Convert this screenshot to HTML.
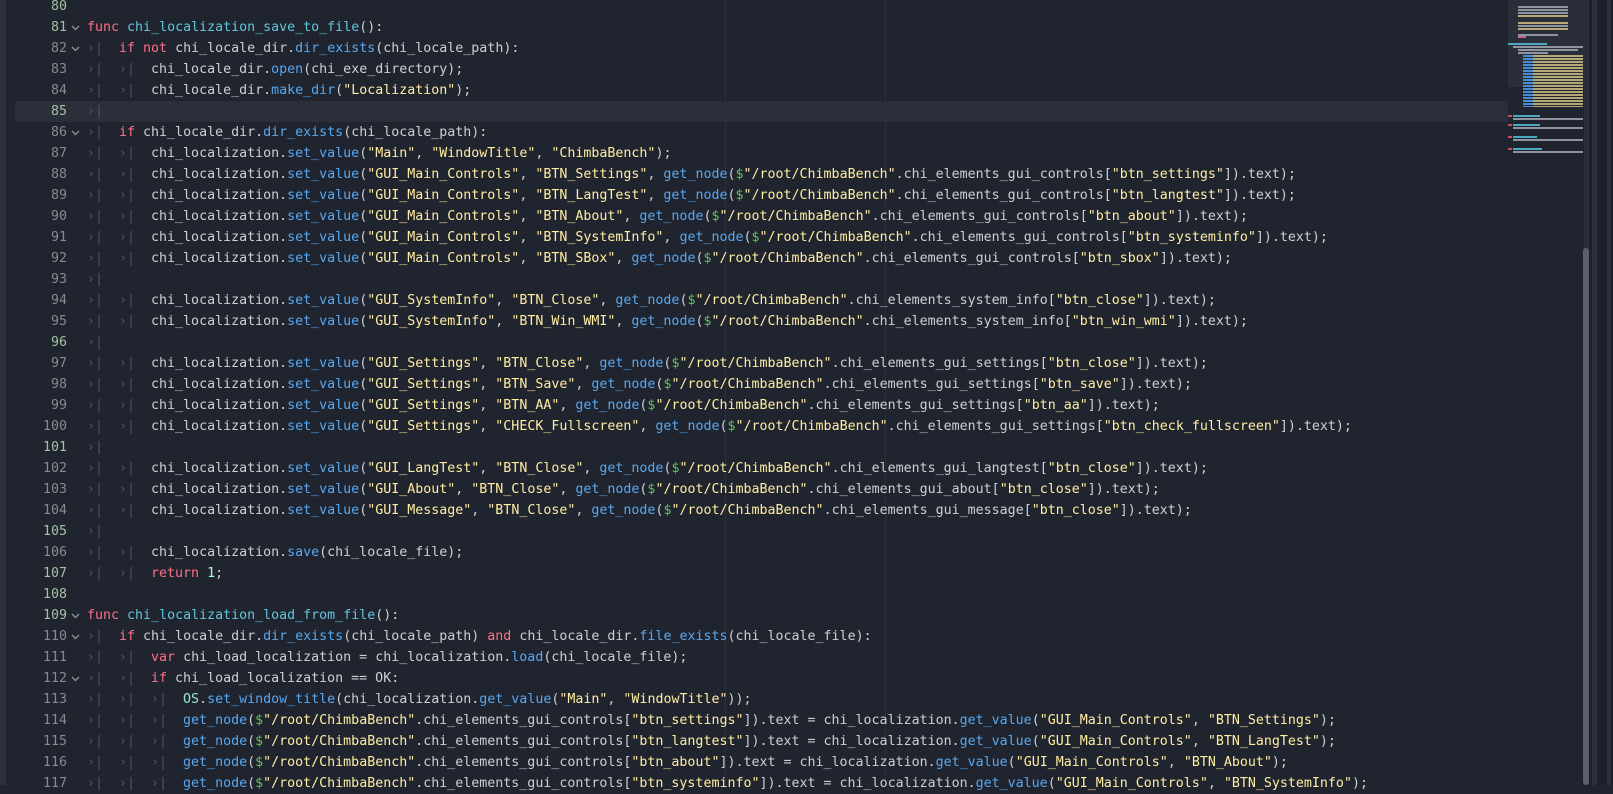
<!DOCTYPE html>
<html><head><meta charset="utf-8"><style>
html,body{margin:0;padding:0;}
body{width:1613px;height:785px;overflow:hidden;background:#20242f;position:relative;font-family:"DejaVu Sans Mono","Liberation Mono",monospace;font-size:13.3px;color:#cdcfd2;}
.lb{position:absolute;left:0;top:0;width:6px;height:785px;background:#2c313d;}
.hl{position:absolute;left:15px;top:100.5px;width:1491px;height:21px;background:#2b2f3a;}
.vg{position:absolute;top:0;width:1px;height:785px;background:#2a2f3c;}
.r{position:absolute;left:0;height:21px;line-height:21px;white-space:pre;width:1506px;}
.ln{position:absolute;left:27px;width:40px;text-align:right;color:#868a93;}
.ln.m{color:#a3c2a2;}
.fd{position:absolute;left:71px;top:8px;width:9px;height:6px;}
.c{position:absolute;left:87px;}
.t{display:inline-block;width:4ch;color:#4c5366;}
.k{color:#ff7085}.f{color:#57a8f0}.d{color:#5fc6dc}.s{color:#ffeda1}.g{color:#63c259}.n{color:#a1ffe0}.o{color:#8fe8d0}
.mm{position:absolute;left:1508px;top:0;width:80px;height:87px;background:#2a2e39;}
.bar{position:absolute;height:2px;}
</style></head><body>
<svg width="0" height="0" style="position:absolute"><defs><symbol id="ch" viewBox="0 0 9 6"><path d="M1 1 L4.5 4.5 L8 1" fill="none" stroke="#8a8e97" stroke-width="1.4"/></symbol></defs></svg>
<div class="lb"></div>
<div class="hl"></div>
<div class="vg" style="left:725px"></div>
<div class="vg" style="left:885px"></div>

<div class="r" style="top:-4.5px"><span class="ln m">80</span></div>
<div class="r" style="top:16.5px"><span class="ln m">81</span><svg class="fd"><use href="#ch"/></svg><span class="c"><span class="k">func</span> <span class="d">chi_localization_save_to_file</span>():</span></div>
<div class="r" style="top:37.5px"><span class="ln">82</span><svg class="fd"><use href="#ch"/></svg><span class="c"><span class="t">›|</span><span class="k">if</span> <span class="k">not</span> chi_locale_dir.<span class="f">dir_exists</span>(chi_locale_path):</span></div>
<div class="r" style="top:58.5px"><span class="ln">83</span><span class="c"><span class="t">›|</span><span class="t">›|</span>chi_locale_dir.<span class="f">open</span>(chi_exe_directory);</span></div>
<div class="r" style="top:79.5px"><span class="ln">84</span><span class="c"><span class="t">›|</span><span class="t">›|</span>chi_locale_dir.<span class="f">make_dir</span>(<span class="s">"Localization"</span>);</span></div>
<div class="r" style="top:100.5px"><span class="ln m">85</span><span class="c"><span class="t">›|</span></span></div>
<div class="r" style="top:121.5px"><span class="ln">86</span><svg class="fd"><use href="#ch"/></svg><span class="c"><span class="t">›|</span><span class="k">if</span> chi_locale_dir.<span class="f">dir_exists</span>(chi_locale_path):</span></div>
<div class="r" style="top:142.5px"><span class="ln">87</span><span class="c"><span class="t">›|</span><span class="t">›|</span>chi_localization.<span class="f">set_value</span>(<span class="s">"Main"</span>, <span class="s">"WindowTitle"</span>, <span class="s">"ChimbaBench"</span>);</span></div>
<div class="r" style="top:163.5px"><span class="ln">88</span><span class="c"><span class="t">›|</span><span class="t">›|</span>chi_localization.<span class="f">set_value</span>(<span class="s">"GUI_Main_Controls"</span>, <span class="s">"BTN_Settings"</span>, <span class="f">get_node</span>(<span class="g">$</span><span class="s">"/root/ChimbaBench"</span>.chi_elements_gui_controls[<span class="s">"btn_settings"</span>]).text);</span></div>
<div class="r" style="top:184.5px"><span class="ln">89</span><span class="c"><span class="t">›|</span><span class="t">›|</span>chi_localization.<span class="f">set_value</span>(<span class="s">"GUI_Main_Controls"</span>, <span class="s">"BTN_LangTest"</span>, <span class="f">get_node</span>(<span class="g">$</span><span class="s">"/root/ChimbaBench"</span>.chi_elements_gui_controls[<span class="s">"btn_langtest"</span>]).text);</span></div>
<div class="r" style="top:205.5px"><span class="ln">90</span><span class="c"><span class="t">›|</span><span class="t">›|</span>chi_localization.<span class="f">set_value</span>(<span class="s">"GUI_Main_Controls"</span>, <span class="s">"BTN_About"</span>, <span class="f">get_node</span>(<span class="g">$</span><span class="s">"/root/ChimbaBench"</span>.chi_elements_gui_controls[<span class="s">"btn_about"</span>]).text);</span></div>
<div class="r" style="top:226.5px"><span class="ln">91</span><span class="c"><span class="t">›|</span><span class="t">›|</span>chi_localization.<span class="f">set_value</span>(<span class="s">"GUI_Main_Controls"</span>, <span class="s">"BTN_SystemInfo"</span>, <span class="f">get_node</span>(<span class="g">$</span><span class="s">"/root/ChimbaBench"</span>.chi_elements_gui_controls[<span class="s">"btn_systeminfo"</span>]).text);</span></div>
<div class="r" style="top:247.5px"><span class="ln">92</span><span class="c"><span class="t">›|</span><span class="t">›|</span>chi_localization.<span class="f">set_value</span>(<span class="s">"GUI_Main_Controls"</span>, <span class="s">"BTN_SBox"</span>, <span class="f">get_node</span>(<span class="g">$</span><span class="s">"/root/ChimbaBench"</span>.chi_elements_gui_controls[<span class="s">"btn_sbox"</span>]).text);</span></div>
<div class="r" style="top:268.5px"><span class="ln">93</span><span class="c"><span class="t">›|</span></span></div>
<div class="r" style="top:289.5px"><span class="ln">94</span><span class="c"><span class="t">›|</span><span class="t">›|</span>chi_localization.<span class="f">set_value</span>(<span class="s">"GUI_SystemInfo"</span>, <span class="s">"BTN_Close"</span>, <span class="f">get_node</span>(<span class="g">$</span><span class="s">"/root/ChimbaBench"</span>.chi_elements_system_info[<span class="s">"btn_close"</span>]).text);</span></div>
<div class="r" style="top:310.5px"><span class="ln">95</span><span class="c"><span class="t">›|</span><span class="t">›|</span>chi_localization.<span class="f">set_value</span>(<span class="s">"GUI_SystemInfo"</span>, <span class="s">"BTN_Win_WMI"</span>, <span class="f">get_node</span>(<span class="g">$</span><span class="s">"/root/ChimbaBench"</span>.chi_elements_system_info[<span class="s">"btn_win_wmi"</span>]).text);</span></div>
<div class="r" style="top:331.5px"><span class="ln m">96</span><span class="c"><span class="t">›|</span></span></div>
<div class="r" style="top:352.5px"><span class="ln">97</span><span class="c"><span class="t">›|</span><span class="t">›|</span>chi_localization.<span class="f">set_value</span>(<span class="s">"GUI_Settings"</span>, <span class="s">"BTN_Close"</span>, <span class="f">get_node</span>(<span class="g">$</span><span class="s">"/root/ChimbaBench"</span>.chi_elements_gui_settings[<span class="s">"btn_close"</span>]).text);</span></div>
<div class="r" style="top:373.5px"><span class="ln">98</span><span class="c"><span class="t">›|</span><span class="t">›|</span>chi_localization.<span class="f">set_value</span>(<span class="s">"GUI_Settings"</span>, <span class="s">"BTN_Save"</span>, <span class="f">get_node</span>(<span class="g">$</span><span class="s">"/root/ChimbaBench"</span>.chi_elements_gui_settings[<span class="s">"btn_save"</span>]).text);</span></div>
<div class="r" style="top:394.5px"><span class="ln">99</span><span class="c"><span class="t">›|</span><span class="t">›|</span>chi_localization.<span class="f">set_value</span>(<span class="s">"GUI_Settings"</span>, <span class="s">"BTN_AA"</span>, <span class="f">get_node</span>(<span class="g">$</span><span class="s">"/root/ChimbaBench"</span>.chi_elements_gui_settings[<span class="s">"btn_aa"</span>]).text);</span></div>
<div class="r" style="top:415.5px"><span class="ln">100</span><span class="c"><span class="t">›|</span><span class="t">›|</span>chi_localization.<span class="f">set_value</span>(<span class="s">"GUI_Settings"</span>, <span class="s">"CHECK_Fullscreen"</span>, <span class="f">get_node</span>(<span class="g">$</span><span class="s">"/root/ChimbaBench"</span>.chi_elements_gui_settings[<span class="s">"btn_check_fullscreen"</span>]).text);</span></div>
<div class="r" style="top:436.5px"><span class="ln m">101</span><span class="c"><span class="t">›|</span></span></div>
<div class="r" style="top:457.5px"><span class="ln">102</span><span class="c"><span class="t">›|</span><span class="t">›|</span>chi_localization.<span class="f">set_value</span>(<span class="s">"GUI_LangTest"</span>, <span class="s">"BTN_Close"</span>, <span class="f">get_node</span>(<span class="g">$</span><span class="s">"/root/ChimbaBench"</span>.chi_elements_gui_langtest[<span class="s">"btn_close"</span>]).text);</span></div>
<div class="r" style="top:478.5px"><span class="ln">103</span><span class="c"><span class="t">›|</span><span class="t">›|</span>chi_localization.<span class="f">set_value</span>(<span class="s">"GUI_About"</span>, <span class="s">"BTN_Close"</span>, <span class="f">get_node</span>(<span class="g">$</span><span class="s">"/root/ChimbaBench"</span>.chi_elements_gui_about[<span class="s">"btn_close"</span>]).text);</span></div>
<div class="r" style="top:499.5px"><span class="ln">104</span><span class="c"><span class="t">›|</span><span class="t">›|</span>chi_localization.<span class="f">set_value</span>(<span class="s">"GUI_Message"</span>, <span class="s">"BTN_Close"</span>, <span class="f">get_node</span>(<span class="g">$</span><span class="s">"/root/ChimbaBench"</span>.chi_elements_gui_message[<span class="s">"btn_close"</span>]).text);</span></div>
<div class="r" style="top:520.5px"><span class="ln m">105</span><span class="c"><span class="t">›|</span></span></div>
<div class="r" style="top:541.5px"><span class="ln">106</span><span class="c"><span class="t">›|</span><span class="t">›|</span>chi_localization.<span class="f">save</span>(chi_locale_file);</span></div>
<div class="r" style="top:562.5px"><span class="ln m">107</span><span class="c"><span class="t">›|</span><span class="t">›|</span><span class="k">return</span> <span class="n">1</span>;</span></div>
<div class="r" style="top:583.5px"><span class="ln m">108</span></div>
<div class="r" style="top:604.5px"><span class="ln m">109</span><svg class="fd"><use href="#ch"/></svg><span class="c"><span class="k">func</span> <span class="d">chi_localization_load_from_file</span>():</span></div>
<div class="r" style="top:625.5px"><span class="ln">110</span><svg class="fd"><use href="#ch"/></svg><span class="c"><span class="t">›|</span><span class="k">if</span> chi_locale_dir.<span class="f">dir_exists</span>(chi_locale_path) <span class="k">and</span> chi_locale_dir.<span class="f">file_exists</span>(chi_locale_file):</span></div>
<div class="r" style="top:646.5px"><span class="ln">111</span><span class="c"><span class="t">›|</span><span class="t">›|</span><span class="k">var</span> chi_load_localization = chi_localization.<span class="f">load</span>(chi_locale_file);</span></div>
<div class="r" style="top:667.5px"><span class="ln">112</span><svg class="fd"><use href="#ch"/></svg><span class="c"><span class="t">›|</span><span class="t">›|</span><span class="k">if</span> chi_load_localization == OK:</span></div>
<div class="r" style="top:688.5px"><span class="ln">113</span><span class="c"><span class="t">›|</span><span class="t">›|</span><span class="t">›|</span><span class="o">OS</span>.<span class="f">set_window_title</span>(chi_localization.<span class="f">get_value</span>(<span class="s">"Main"</span>, <span class="s">"WindowTitle"</span>));</span></div>
<div class="r" style="top:709.5px"><span class="ln">114</span><span class="c"><span class="t">›|</span><span class="t">›|</span><span class="t">›|</span><span class="f">get_node</span>(<span class="g">$</span><span class="s">"/root/ChimbaBench"</span>.chi_elements_gui_controls[<span class="s">"btn_settings"</span>]).text = chi_localization.<span class="f">get_value</span>(<span class="s">"GUI_Main_Controls"</span>, <span class="s">"BTN_Settings"</span>);</span></div>
<div class="r" style="top:730.5px"><span class="ln">115</span><span class="c"><span class="t">›|</span><span class="t">›|</span><span class="t">›|</span><span class="f">get_node</span>(<span class="g">$</span><span class="s">"/root/ChimbaBench"</span>.chi_elements_gui_controls[<span class="s">"btn_langtest"</span>]).text = chi_localization.<span class="f">get_value</span>(<span class="s">"GUI_Main_Controls"</span>, <span class="s">"BTN_LangTest"</span>);</span></div>
<div class="r" style="top:751.5px"><span class="ln">116</span><span class="c"><span class="t">›|</span><span class="t">›|</span><span class="t">›|</span><span class="f">get_node</span>(<span class="g">$</span><span class="s">"/root/ChimbaBench"</span>.chi_elements_gui_controls[<span class="s">"btn_about"</span>]).text = chi_localization.<span class="f">get_value</span>(<span class="s">"GUI_Main_Controls"</span>, <span class="s">"BTN_About"</span>);</span></div>
<div class="r" style="top:772.5px"><span class="ln">117</span><span class="c"><span class="t">›|</span><span class="t">›|</span><span class="t">›|</span><span class="f">get_node</span>(<span class="g">$</span><span class="s">"/root/ChimbaBench"</span>.chi_elements_gui_controls[<span class="s">"btn_systeminfo"</span>]).text = chi_localization.<span class="f">get_value</span>(<span class="s">"GUI_Main_Controls"</span>, <span class="s">"BTN_SystemInfo"</span>);</span></div>

<!-- minimap -->
<div class="mm"></div>
<div style="position:absolute;left:1450px;top:101px;width:58px;height:21px;background:#2b2f3a"></div>
<div style="position:absolute;left:1588px;top:0;width:25px;height:785px;background:#1c2029"></div>
<div style="position:absolute;left:1592px;top:0;width:5px;height:785px;background:#2a3040"></div>
<div style="position:absolute;left:1607px;top:0;width:4px;height:785px;background:#2a3040"></div>
<div style="position:absolute;left:1584px;top:0;width:5px;height:785px;background:#2b2f3a"></div>
<div style="position:absolute;left:1583px;top:248px;width:6px;height:537px;background:#5c5f68;border-radius:3px"></div>

<div class="bar" style="left:1518px;top:6px;width:50px;background:#8f94a0"></div>
<div class="bar" style="left:1518px;top:9px;width:50px;background:#8f94a0"></div>
<div class="bar" style="left:1518px;top:12px;width:50px;background:#8f94a0"></div>
<div class="bar" style="left:1518px;top:15px;width:50px;background:#b5a874"></div>
<div class="bar" style="left:1518px;top:22px;width:50px;background:#b5a874"></div>
<div class="bar" style="left:1518px;top:25px;width:50px;background:#8f94a0"></div>
<div class="bar" style="left:1518px;top:28px;width:50px;background:#b5a874"></div>
<div class="bar" style="left:1518px;top:34px;width:40px;background:#8f94a0"></div>
<div class="bar" style="left:1518px;top:36px;width:8px;background:#c06a90"></div>
<div class="bar" style="left:1508px;top:43px;width:39px;background:#4aa8c0"></div>
<div class="bar" style="left:1513px;top:46px;width:70px;background:#8f94a0"></div>
<div class="bar" style="left:1518px;top:49px;width:60px;background:#8f94a0"></div>
<div class="bar" style="left:1518px;top:52px;width:30px;background:#8f94a0"></div>
<div style="position:absolute;left:1523px;top:55px;width:60px;height:52px;background:repeating-linear-gradient(#b5a874 0 2px,transparent 2px 3px)"></div>
<div style="position:absolute;left:1523px;top:55px;width:10px;height:52px;background:repeating-linear-gradient(#4a8ed0 0 2px,transparent 2px 3px)"></div>
<div class="bar" style="left:1508px;top:115px;width:4px;background:#c05060"></div>
<div class="bar" style="left:1513px;top:115px;width:27px;background:#4aa8c0"></div>
<div class="bar" style="left:1513px;top:118px;width:70px;background:#8f94a0"></div>
<div class="bar" style="left:1508px;top:124px;width:4px;background:#c05060"></div>
<div class="bar" style="left:1513px;top:124px;width:27px;background:#4aa8c0"></div>
<div class="bar" style="left:1513px;top:127px;width:70px;background:#8f94a0"></div>
<div class="bar" style="left:1508px;top:136px;width:4px;background:#c05060"></div>
<div class="bar" style="left:1513px;top:136px;width:24px;background:#4aa8c0"></div>
<div class="bar" style="left:1513px;top:139px;width:70px;background:#8f94a0"></div>
<div class="bar" style="left:1508px;top:148px;width:4px;background:#c05060"></div>
<div class="bar" style="left:1513px;top:148px;width:29px;background:#4aa8c0"></div>
<div class="bar" style="left:1513px;top:151px;width:70px;background:#8f94a0"></div>
</body></html>
